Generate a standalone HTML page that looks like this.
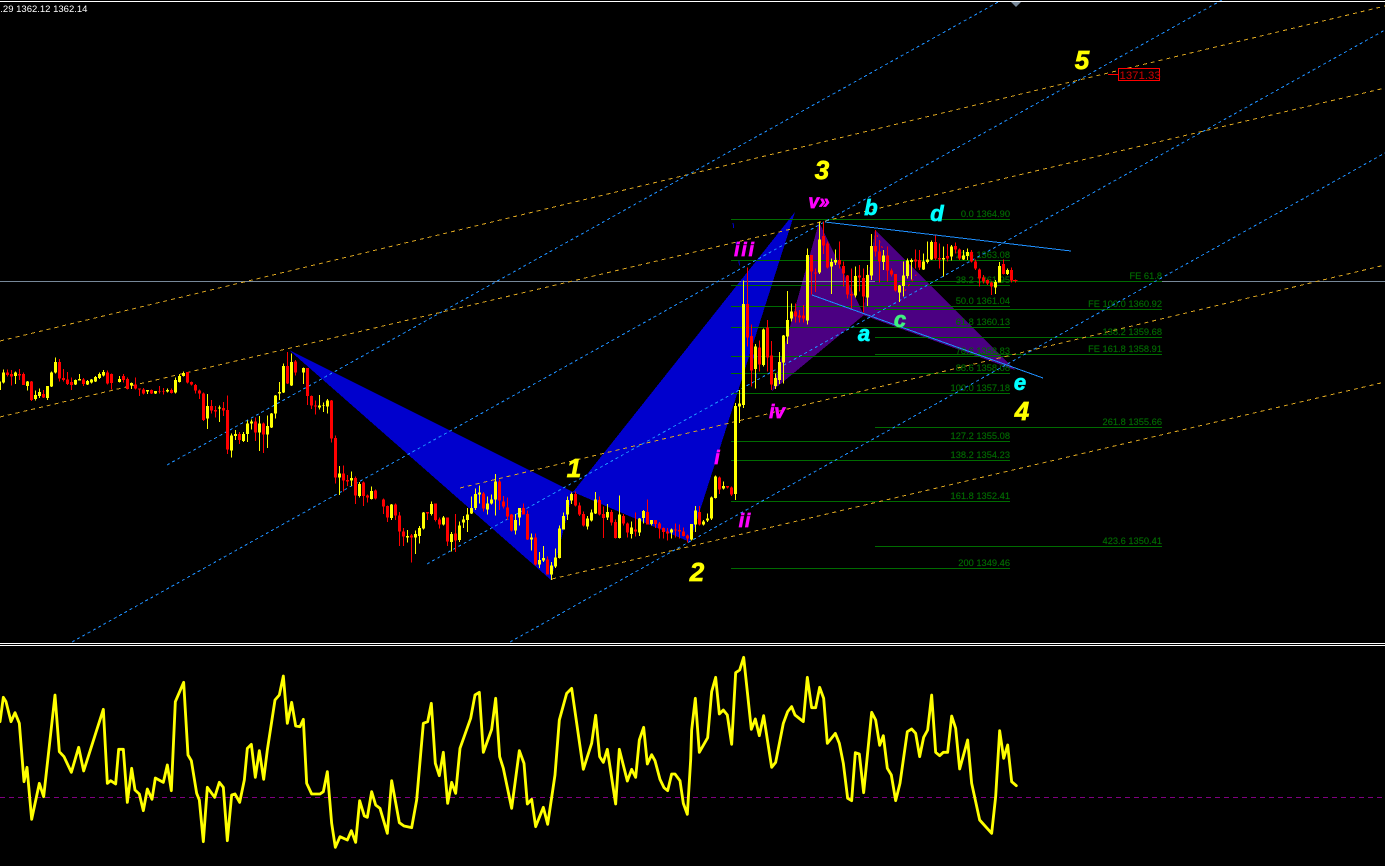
<!DOCTYPE html>
<html>
<head>
<meta charset="utf-8">
<title>Chart</title>
<style>
html,body{margin:0;padding:0;background:#000;width:1385px;height:866px;overflow:hidden}
svg{position:absolute;left:0;top:0;display:block}
.fl{stroke:#006b00;stroke-width:1;shape-rendering:crispEdges}
.ft{font:9.3px "Liberation Sans",sans-serif;fill:#007000;text-anchor:end;stroke:#006000;stroke-width:.15}
.bl{stroke:#1e90ff;stroke-width:1;stroke-dasharray:3 3;fill:none}
.or{stroke:#daa520;stroke-width:1;stroke-dasharray:4 4;fill:none}
.wy{font:italic bold 26px "Liberation Sans",sans-serif;fill:#ff0;stroke:#ff0;stroke-width:.7;text-anchor:middle}
.wm{font:italic bold 19px "Liberation Sans",sans-serif;fill:#f0f;stroke:#f0f;stroke-width:.7;text-anchor:middle}
.wc{font:italic bold 22px "Liberation Sans",sans-serif;fill:#0ff;stroke:#0ff;stroke-width:.7;text-anchor:middle}
.yw{stroke:#ff0;stroke-width:3;fill:none}
.yb{stroke:#ff0;stroke-width:10;fill:none}
.rw{stroke:#f00;stroke-width:3;fill:none}
.rb{stroke:#f00;stroke-width:10;fill:none}
</style>
</head>
<body>
<svg width="1385" height="866" viewBox="0 0 1385 866" xmlns="http://www.w3.org/2000/svg">
<rect width="1385" height="866" fill="#000"/>

<!-- harmonic patterns -->
<g shape-rendering="crispEdges">
<polygon points="289,350 573,492 551,580" fill="#0000cd"/>
<polygon points="573,492 795,212 690,542" fill="#0000cd"/>
<polygon points="819,222 772,391 864,315" fill="#4b0082"/>
<polygon points="875,230 863,315 1015,370" fill="#4b0082"/>
</g>

<!-- current price line -->
<path d="M0 281.5H1385" stroke="#778899" stroke-width="1" shape-rendering="crispEdges"/>

<!-- fibo lines -->
<g class="fl">
<path d="M731 219.5H1010M731 260.5H1010M731 285.5H1010M731 306.5H1010M731 327.5H1010M731 356.5H1010M731 373.5H1010M731 393.5H1010M731 441.5H1010M731 460.5H1010M731 501.5H1010M731 568.5H1010"/>
<path d="M875 281.5H1162M875 309.5H1162M875 337.5H1162M875 354.5H1162M875 427.5H1162M875 546.5H1162"/>
</g>
<g class="ft">
<text x="1010" y="217">0.0 1364.90</text>
<text x="1010" y="258">23.6 1363.08</text>
<text x="1010" y="283">38.2 1361.95</text>
<text x="1010" y="304">50.0 1361.04</text>
<text x="1010" y="325">61.8 1360.13</text>
<text x="1010" y="354">78.6 1358.83</text>
<text x="1010" y="371">88.6 1358.08</text>
<text x="1010" y="391">100.0 1357.18</text>
<text x="1010" y="439">127.2 1355.08</text>
<text x="1010" y="458">138.2 1354.23</text>
<text x="1010" y="499">161.8 1352.41</text>
<text x="1010" y="566">200 1349.46</text>
<text x="1162" y="279">FE 61.8</text>
<text x="1162" y="307">FE 100.0 1360.92</text>
<text x="1162" y="335">138.2 1359.68</text>
<text x="1162" y="352">FE 161.8 1358.91</text>
<text x="1162" y="425">261.8 1355.66</text>
<text x="1162" y="544">423.6 1350.41</text>
</g>

<!-- channels -->
<g shape-rendering="crispEdges">
<path class="or" d="M0 417L1385 88"/>
<path class="or" d="M0 341L1385 6"/>
<path class="or" d="M460 488L1385 265"/>
<path class="or" d="M552 579L1385 382"/>
<path class="bl" d="M72 642L1222 0"/>
<path class="bl" d="M167 465L1000 1"/>
<path class="bl" d="M427 564L1385 30"/>
<path class="bl" d="M510 642L1385 153"/>
<path d="M733 223L759 392" stroke="#0000cd" stroke-width="1" stroke-dasharray="5 14" fill="none"/>
<path d="M877 235L884 252M905 291L918 272" stroke="#f00" stroke-width="1" stroke-dasharray="2 4" fill="none"/>
<path d="M825 222L1071 251" stroke="#1e90ff" stroke-width="1" fill="none"/>
<path d="M812 295L1043 378" stroke="#1e90ff" stroke-width="1" fill="none"/>
</g>

<!-- candles region 1 -->
<g transform="translate(0.17,340) scale(.33333)" shape-rendering="crispEdges">
<path class="yw" d="M10 88V130M46 94V132M82 123V152M106 152V182M118 145V174M142 138V180M154 94V141M166 52V100M226 118V135M238 102V122M262 120V135M274 117V131M286 108V126M298 97V117M310 90V110M358 108V128M394 127V147M442 150V162M466 153V162M502 145V158M526 112V160M538 104V128M550 94V110M622 162V267M658 197V246M694 280V353M706 270V300M730 276V306M742 242V306M754 238V268M778 228V333M802 226V324M814 219V264M826 165V236M838 126V180M850 70V159M874 40V138M910 82V132M958 165V208M970 188V216M982 177V221M1018 378V465"/>
<path class="yb" d="M-2 125V150M10 97V128M46 98V108M82 124V138M106 165V177M118 156V168M142 138V174M154 98V140M166 66V98M226 120V134M238 117V122M262 123V134M274 118V128M286 111V125M298 102V114M310 96V106M358 117V126M394 129V137M442 150V155M466 153V161M502 150V155M526 120V158M538 108V126M550 99V108M622 198V236M658 203V206M694 286V332M706 282V288M730 282V303M742 250V282M754 244V250M778 250V278M802 258V284M814 220V263M826 166V221M838 156V160M850 78V158M874 66V136M910 84V98M958 196V202M970 196V198M982 181V200M1018 400V413"/>
<path class="rw" d="M22 88V110M34 90V137M58 87V120M70 98V135M94 123V183M130 150V174M178 57V125M190 87V125M202 96V135M214 112V150M250 114V138M322 92V133M334 100V148M370 102V128M382 112V148M406 112V148M418 145V168M430 144V163M454 149V162M478 138V160M490 144V164M514 146V160M562 96V130M574 124V136M586 132V160M598 148V177M610 158V243M634 180V220M646 198V232M670 186V228M682 166V342M718 276V312M766 232V303M790 248V339M862 36V132M886 60V106M922 84V195M934 166V207M946 182V224M994 180V307M1006 286V431M1030 376V454M1042 405V438"/>
<path class="rb" d="M22 98V105M34 102V110M58 102V107M70 102V135M94 124V180M130 162V173M178 66V116M190 114V120M202 118V132M214 126V135M250 118V132M322 97V131M334 102V129M370 108V120M382 117V147M406 133V146M418 146V148M430 148V161M454 150V161M478 153V155M490 153V155M514 150V159M562 96V128M574 126V134M586 135V152M598 151V161M610 160V240M634 198V212M646 210V215M670 204V212M682 210V328M718 282V300M766 244V278M790 250V284M862 78V130M886 64V98M922 84V168M934 168V197M946 196V200M994 181V296M1006 294V412M1030 400V422M1042 420V424"/>
</g>

<!-- candles region 2 -->
<g transform="translate(350.17,440) scale(.33333)" shape-rendering="crispEdges">
<path class="yw" d="M4 94V138M28 126V172M64 140V178M124 192V240M172 270V308M196 272V342M208 258V310M220 216V268M244 184V226M280 228V256M304 276V334M328 244V306M340 228V264M352 204V276M364 170V222M376 145V210M388 136V190M412 170V224M424 164V194M436 102V226M496 222V284M508 204V256M544 280V332M568 336V384M580 318V366M604 366V420M616 326V384M628 256V356M640 218V268M652 170V240M664 158V192M712 228V268M724 208V244M736 156V222M772 192V240M808 166V296M844 244V296M868 234V288M880 210V250M904 240V256M964 266V296M1024 252V302M1036 198V276M1060 240V256M1072 220V246M1084 170V240M1096 106V176M1120 124V148"/>
<path class="yb" d="M4 114V122M28 132V168M64 153V177M124 194V234M172 288V293M196 282V293M208 264V288M220 217V266M244 192V222M280 232V254M304 282V306M328 256V300M340 238V248M352 224V240M364 204V220M376 162V204M388 158V164M412 190V208M424 178V190M436 124V178M496 240V272M508 204V232M544 292V298M568 360V374M580 354V362M604 376V404M616 352V380M628 266V354M640 228V268M652 180V224M664 162V182M712 236V260M724 218V242M736 178V220M772 216V232M808 224V294M844 262V282M868 236V278M880 213V234M904 240V252M964 268V278M1024 252V298M1036 212V254M1060 244V254M1072 236V242M1084 172V236M1096 110V174M1120 138V146"/>
<path class="rw" d="M16 110V192M40 125V198M52 163V188M76 148V178M100 175V222M112 196V246M136 190V240M148 216V318M160 264V318M184 282V368M232 216V240M256 190V244M268 232V266M292 232V318M316 222V336M400 156V214M448 118V210M460 168V206M472 172V240M484 222V274M520 190V224M532 212V300M556 280V376M592 350V404M676 154V200M688 188V228M700 214V260M748 170V226M760 200V294M784 210V256M796 238V296M820 222V256M832 248V292M856 218V290M892 178V254M916 240V264M928 246V296M940 262V296M952 264V302M976 250V292M988 254V296M1000 262V290M1012 284V308M1048 198V256M1108 110V162M1132 138V146M1144 140V168"/>
<path class="rb" d="M16 114V166M40 127V168M52 166V172M76 151V176M100 178V200M112 198V232M136 194V226M148 226V274M160 274V290M184 286V292M232 216V220M256 190V240M268 238V254M292 232V304M316 280V302M400 160V206M448 124V182M460 184V200M472 202V230M484 224V272M520 204V224M532 222V298M556 292V374M592 358V404M676 162V196M688 196V224M700 222V256M748 180V224M760 222V234M784 216V248M796 246V294M820 228V250M832 250V278M856 268V274M892 216V254M916 240V252M928 250V266M940 264V276M952 274V280M976 268V272M988 270V274M1000 274V288M1012 286V296M1048 216V254M1108 112V148M1132 138V142M1144 142V164"/>
</g>

<!-- candles region 3 -->
<g transform="translate(700.17,190) scale(.33333)" shape-rendering="crispEdges">
<path class="yw" d="M106 639V930M118 600V699M130 272V654M166 462V595M190 415V530M226 550V597M238 486V582M250 435V580M262 303V462M274 340V395M322 175V404M358 95V252M394 205V312M406 178V225M466 230V322M502 225V348M514 132V270M550 180V240M598 285V336M610 215V320M622 205V265M634 205V268M670 190V240M682 155V220M694 152V210M730 170V260M754 165V212M790 180V210M802 176V210M886 270V312M898 216V278M922 236V255"/>
<path class="yb" d="M106 648V912M118 640V650M130 342V645M166 470V537M190 418V525M226 564V588M238 516V570M250 436V518M262 390V440M274 364V386M322 195V392M358 148V248M394 216V230M406 210V218M466 258V316M502 255V322M514 168V256M550 196V216M598 286V308M610 256V288M622 212V258M634 210V216M670 214V238M682 208V216M694 156V208M730 204V208M754 170V200M790 196V208M802 186V198M886 276V292M898 228V278M922 240V252"/>
<path class="rw" d="M142 232V470M154 403V590M178 452V545M202 390V545M214 453V600M286 340V398M298 360V398M310 345V398M334 195V314M346 235V306M370 95V192M382 155V235M418 155V235M430 215V290M442 255V325M454 235V355M478 225V305M490 235V368M526 120V200M538 150V278M562 170V275M574 235V260M586 252V305M646 178V235M658 180V240M706 136V210M718 160V236M742 162V215M766 158V190M778 175V210M814 180V218M826 208V240M838 236V290M850 255V280M862 268V285M874 275V315M910 208V254M934 232V278M946 268V277"/>
<path class="rb" d="M142 342V442M154 438V542M178 472V524M202 412V502M214 496V584M286 364V380M298 376V382M310 376V386M334 195V244M346 248V250M370 138V166M382 160V232M418 210V224M430 228V250M442 256V314M454 312V316M478 256V262M490 264V320M526 168V184M538 184V214M562 196V242M574 242V254M586 252V302M646 208V214M658 210V232M706 156V206M718 204V208M742 198V206M766 168V178M778 178V206M814 186V214M826 214V236M838 238V266M850 262V274M862 270V280M874 277V290M910 222V252M934 240V272M946 270V273"/>
<path d="M938 272H952" stroke="#f00" stroke-width="3" fill="none"/>
</g>

<!-- wave labels -->
<text class="wy" x="574" y="477">1</text>
<text class="wy" x="697" y="581">2</text>
<text class="wy" x="822" y="179">3</text>
<text class="wy" x="1022" y="420">4</text>
<text class="wy" x="1082" y="69">5</text>
<text class="wm" x="717" y="464">i</text>
<text class="wm" x="745" y="527" letter-spacing="1">ii</text>
<text class="wm" x="745" y="256" letter-spacing="2">iii</text>
<text class="wm" x="777" y="418">iv</text>
<text class="wm" x="819" y="208">v»</text>
<text class="wc" x="864" y="341">a</text>
<text class="wc" x="871" y="215">b</text>
<text class="wc" x="900" y="327" style="fill:#40f080;stroke:#40f080">c</text>
<text class="wc" x="937" y="221">d</text>
<text class="wc" x="1020" y="390">e</text>

<!-- 1371.33 label -->
<path d="M1108 74.5H1118" stroke="#f00" stroke-width="1" shape-rendering="crispEdges"/>
<rect x="1118.5" y="68.5" width="41" height="12" fill="#000" stroke="#f00" stroke-width="1" shape-rendering="crispEdges"/>
<text x="1119.5" y="79" style="font:11.4px 'Liberation Sans',sans-serif;fill:#d00000">1371.33</text>

<!-- panel borders -->
<path d="M0 1.5H1385M0 643.5H1385M0 645.5H1385" stroke="#fff" stroke-width="1" shape-rendering="crispEdges"/>
<polygon points="1011,2 1021,2 1016,7" fill="#778899"/>
<text x="-5" y="12" style="font:9.5px 'Liberation Sans',sans-serif;fill:#fff">2.29 1362.12 1362.14</text>

<!-- RSI -->
<path d="M0 797.5H1385" stroke="#800080" stroke-width="1" stroke-dasharray="5 4" shape-rendering="crispEdges"/>
<g transform="translate(0,640) scale(.33333)" fill="none" stroke="#ff0" stroke-width="8.5" stroke-linejoin="round" stroke-linecap="round">
<polyline points="0,245 10,172 18,185 33,245 45,218 58,250 72,425 81,382 95,538 118,430 131,470 165,165 178,335 192,350 214,397 236,322 251,393 310,208 322,430 332,422 347,432 356,328 370,328 382,487 395,385 405,450 418,462 430,512 442,447 456,478 466,414 490,427 502,375 514,452 526,185 551,127 564,345 574,362 590,460 598,480 610,605 622,442 644,472 658,427 670,442 682,602 695,465 705,462 719,487 733,420 742,325 754,313 766,412 778,332 791,418 802,330 825,180 838,165 850,108 862,250 875,187 887,258 900,260 910,238 920,430 935,462 960,462 970,455 982,395 995,550 1006,622 1020,590 1042,600 1054,572 1067,607 1079,482 1093,528 1102,532 1115,455 1127,495 1140,505 1162,580 1175,422 1198,548 1212,558 1235,563 1250,480 1270,250 1283,245 1294,190 1306,370 1318,407 1330,337 1343,490 1355,427 1367,460 1380,325 1412,235 1425,165 1438,157 1450,337 1475,268 1487,175 1499,350 1510,385 1535,505 1558,332 1572,370 1582,492 1595,478 1607,560 1630,502 1643,553 1665,405 1678,240 1700,160 1715,145 1750,388 1775,310 1787,226 1799,350 1810,367 1822,328 1847,492 1858,328 1882,423 1895,388 1907,412 1918,300 1931,262 1942,372 1955,344 1965,362 1980,418 1992,443 2003,452 2015,402 2025,402 2040,422 2050,490 2062,523 2072,360 2075,270 2086,175 2098,337 2123,293 2135,155 2147,112 2158,222 2170,210 2182,225 2195,313 2207,98 2219,90 2231,52 2254,268 2266,237 2278,287 2291,227 2315,382 2327,367 2350,250 2363,215 2375,200 2385,225 2410,245 2422,112 2435,203 2447,203 2459,142 2471,175 2482,310 2506,280 2518,310 2530,370 2543,475 2555,482 2566,338 2578,342 2591,458 2615,217 2627,240 2639,316 2650,287 2662,385 2674,405 2687,482 2700,430 2722,275 2735,267 2747,280 2759,350 2771,292 2783,270 2795,165 2807,337 2819,347 2830,337 2843,337 2855,228 2867,265 2879,387 2903,300 2915,430 2939,540 2975,580 2987,470 2999,272 3011,355 3023,315 3035,425 3049,437"/>
</g>
</svg>
</body>
</html>
